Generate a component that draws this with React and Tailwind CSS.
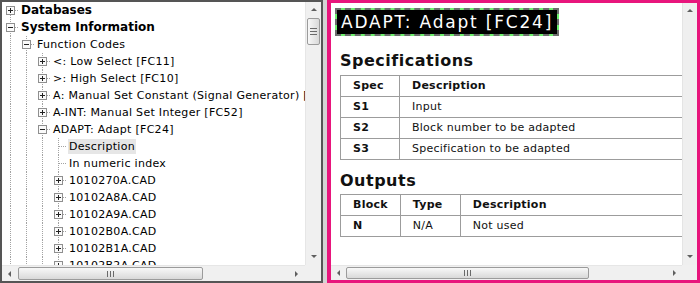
import React from 'react';

const treeRows = [
  { level: 0, label: 'Databases', box: 'plus', bold: true },
  { level: 0, label: 'System Information', box: 'minus', bold: true },
  { level: 1, label: 'Function Codes', box: 'minus' },
  { level: 2, label: '<: Low Select [FC11]', box: 'plus' },
  { level: 2, label: '>: High Select [FC10]', box: 'plus' },
  { level: 2, label: 'A: Manual Set Constant (Signal Generator) [FC2]', box: 'plus' },
  { level: 2, label: 'A-INT: Manual Set Integer [FC52]', box: 'plus' },
  { level: 2, label: 'ADAPT: Adapt [FC24]', box: 'minus' },
  { level: 3, label: 'Description', box: null, selected: true },
  { level: 3, label: 'In numeric index', box: null },
  { level: 3, label: '1010270A.CAD', box: 'plus' },
  { level: 3, label: '10102A8A.CAD', box: 'plus' },
  { level: 3, label: '10102A9A.CAD', box: 'plus' },
  { level: 3, label: '10102B0A.CAD', box: 'plus' },
  { level: 3, label: '10102B1A.CAD', box: 'plus' },
  { level: 3, label: '10102B2A.CAD', box: 'plus' },
];

// one 16px column of tree guide lines
const TreeColumn = ({ own, box, first }) => (
  <svg width="16" height="17" className="shrink-0" shapeRendering="crispEdges">
    <line x1="8.5" y1={first ? 9 : 0} x2="8.5" y2="17" stroke="#a3a3a3" strokeDasharray="1 1" />
    {own && <line x1="9" y1="8.5" x2="16" y2="8.5" stroke="#a3a3a3" strokeDasharray="1 1" />}
    {own && box && (
      <g>
        <rect x="4.5" y="4.5" width="8" height="8" fill="#fafafa" stroke="#8f8f8f" />
        <line x1="6" y1="8.5" x2="11" y2="8.5" stroke="#222" />
        {box === 'plus' && <line x1="8.5" y1="6" x2="8.5" y2="11" stroke="#222" />}
      </g>
    )}
  </svg>
);

const Arrow = ({ dir }) => {
  const pts = {
    up: '1,5 4,2 7,5',
    down: '1,2 4,5 7,2',
    left: '5,1 2,4 5,7',
    right: '2,1 5,4 2,7',
  }[dir];
  return (
    <svg width="8" height="8">
      <polygon points={pts} fill="#5f5f5f" />
    </svg>
  );
};

const VThumb = ({ className }) => (
  <div className={`mx-[1px] rounded-[2px] border border-[#9b9b9b] bg-linear-to-r from-[#f8f8f8] to-[#d9d9d9] flex flex-col items-center justify-center gap-[2px] ${className}`}>
    <div className="w-[7px] h-px bg-[#6a6a6a]" />
    <div className="w-[7px] h-px bg-[#6a6a6a]" />
    <div className="w-[7px] h-px bg-[#6a6a6a]" />
  </div>
);

const HThumb = ({ className }) => (
  <div className={`my-[1px] rounded-[2px] border border-[#9b9b9b] bg-linear-to-b from-[#f8f8f8] to-[#d9d9d9] flex items-center justify-center gap-[2px] ${className}`}>
    <div className="h-[6px] w-px bg-[#6a6a6a]" />
    <div className="h-[6px] w-px bg-[#6a6a6a]" />
    <div className="h-[6px] w-px bg-[#6a6a6a]" />
  </div>
);

const TreePanel = () => (
  <div className="w-[323px] shrink-0 h-full border-2 border-[#555555] bg-white flex flex-col">
    <div className="flex flex-1 min-h-0">
      <div className="flex-1 min-w-0 overflow-hidden">
        {treeRows.map((row, i) => (
          <div key={i} className="flex items-center h-[17px] whitespace-nowrap">
            {Array.from({ length: row.level + 1 }).map((_, c) => (
              <TreeColumn key={c} own={c === row.level} box={row.box} first={i === 0 && c === 0} />
            ))}
            <span
              className={`ml-[2px] px-[1px] text-black leading-[15px] ${row.bold ? 'text-[12px] font-bold' : 'text-[11px] tracking-[0.3px]'} ${row.selected ? 'bg-[#e6e6e6]' : ''}`}
            >
              {row.label}
            </span>
          </div>
        ))}
      </div>
      {/* vertical scrollbar */}
      <div className="w-[16px] shrink-0 bg-[#f0f0f0] border-l border-[#e6e6e6] flex flex-col">
        <div className="h-[16px] flex items-center justify-center"><Arrow dir="up" /></div>
        <VThumb className="h-[27px]" />
        <div className="flex-1" />
        <div className="h-[16px] flex items-center justify-center"><Arrow dir="down" /></div>
      </div>
    </div>
    {/* horizontal scrollbar */}
    <div className="h-[16px] flex">
      <div className="flex-1 bg-[#f0f0f0] border-t border-[#e6e6e6] flex">
        <div className="w-[16px] flex items-center justify-center"><Arrow dir="left" /></div>
        <HThumb className="w-[185px]" />
        <div className="flex-1" />
        <div className="w-[16px] flex items-center justify-center"><Arrow dir="right" /></div>
      </div>
      <div className="w-[16px] bg-[#f0f0f0]" />
    </div>
  </div>
);

const cell = 'border border-[#9c9c9c] h-[21px] px-3 text-left align-middle text-[11px] tracking-[0.25px] text-[#111]';

const ContentPanel = () => (
  <div className="flex-1 min-w-0 h-full border-[3px] border-l-4 border-[#e8157c] bg-white flex flex-col">
    <div className="flex flex-1 min-h-0">
      <div className="flex-1 min-w-0 overflow-hidden">
        <div className="w-[476px] pl-[4px] pt-[5px]">
          <div className="inline-block border-2 border-dashed border-[#6d6d6d] bg-[#6ef06e]">
            <div className="bg-black text-white text-[17px] leading-[24px] h-[24px] px-[4px] tracking-[1.8px] whitespace-nowrap">
              ADAPT: Adapt [FC24]
            </div>
          </div>
          <div className="pl-[5px] pr-[10px]">
            <h2 className="mt-[15px] mb-[4px] text-[16px] leading-[20px] font-bold tracking-[0.5px] text-[#111]">Specifications</h2>
            <table className="w-full border-collapse">
              <thead>
                <tr>
                  <th className={`${cell} font-bold w-[59px]`}>Spec</th>
                  <th className={`${cell} font-bold`}>Description</th>
                </tr>
              </thead>
              <tbody>
                <tr><td className={`${cell} font-bold`}>S1</td><td className={cell}>Input</td></tr>
                <tr><td className={`${cell} font-bold`}>S2</td><td className={cell}>Block number to be adapted</td></tr>
                <tr><td className={`${cell} font-bold`}>S3</td><td className={cell}>Specification to be adapted</td></tr>
              </tbody>
            </table>
            <h2 className="mt-[11px] mb-[3px] text-[16px] leading-[20px] font-bold tracking-[0.5px] text-[#111]">Outputs</h2>
            <table className="w-full border-collapse">
              <thead>
                <tr>
                  <th className={`${cell} font-bold w-[59px]`}>Block</th>
                  <th className={`${cell} font-bold w-[60px]`}>Type</th>
                  <th className={`${cell} font-bold`}>Description</th>
                </tr>
              </thead>
              <tbody>
                <tr>
                  <td className={`${cell} font-bold`}>N</td>
                  <td className={cell}>N/A</td>
                  <td className={cell}>Not used</td>
                </tr>
              </tbody>
            </table>
          </div>
        </div>
      </div>
      {/* vertical scrollbar */}
      <div className="w-[15px] shrink-0 bg-[#efefef] border-l border-[#e4e4e4] flex flex-col">
        <div className="h-[16px] flex items-center justify-center"><Arrow dir="up" /></div>
        <div className="flex-1" />
        <div className="h-[16px] flex items-center justify-center"><Arrow dir="down" /></div>
      </div>
    </div>
    {/* horizontal scrollbar */}
    <div className="h-[15px] flex">
      <div className="flex-1 bg-[#f0f0f0] border-t border-[#e6e6e6] flex">
        <div className="w-[15px] flex items-center justify-center"><Arrow dir="left" /></div>
        <HThumb className="w-[243px]" />
        <div className="flex-1" />
        <div className="w-[15px] flex items-center justify-center"><Arrow dir="right" /></div>
      </div>
      <div className="w-[15px] bg-[#f0f0f0]" />
    </div>
  </div>
);

export default function App() {
  return (
    <div className="flex w-[700px] h-[283px] bg-[#d4d4d4] font-['DejaVu_Sans',sans-serif]">
      <TreePanel />
      <div className="w-[4px] shrink-0 h-full bg-[#d4d4d4]" />
      <ContentPanel />
    </div>
  );
}
